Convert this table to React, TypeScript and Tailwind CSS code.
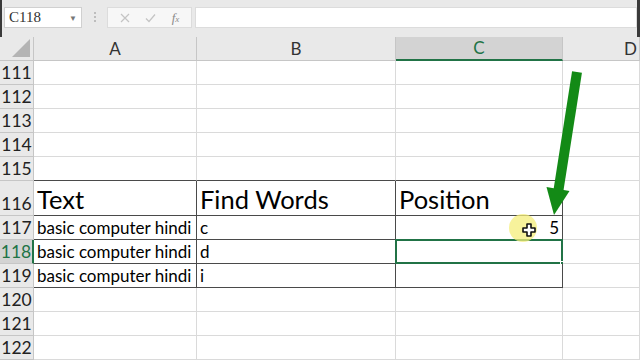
import React from "react";

const FONT = { fontFamily: "Lato, 'Open Sans', sans-serif" };

const rows = [
  { n: 111, h: "small" },
  { n: 112, h: "small" },
  { n: 113, h: "small" },
  { n: 114, h: "small" },
  { n: 115, h: "small" },
  { n: 116, h: "big" },
  { n: 117, h: "small" },
  { n: 118, h: "small" },
  { n: 119, h: "small" },
  { n: 120, h: "small" },
  { n: 121, h: "small" },
  { n: 122, h: "small" },
];

const tableData: Record<number, [string, string, string]> = {
  116: ["Text", "Find Words", "Position"],
  117: ["basic computer hindi", "c", "5"],
  118: ["basic computer hindi", "d", ""],
  119: ["basic computer hindi", "i", ""],
};

function inTable(row: number) {
  return row >= 116 && row <= 119;
}

function Cell({ row, col }: { row: number; col: number }) {
  const table = inTable(row) && col < 3;
  const topEdge = row === 115 && col < 3;
  const rightDark = table;
  const bottomDark = table || topEdge;
  const text = tableData[row]?.[col] ?? "";
  const header = row === 116;
  const numeric = col === 2 && row === 117;
  const selected = row === 118 && col === 2;

  return (
    <div
      className={`relative flex items-end overflow-visible whitespace-nowrap border-b border-r bg-white ${
        rightDark ? "border-r-[#4a4a4a]" : "border-r-[#dadada]"
      } ${bottomDark ? "border-b-[#4a4a4a]" : "border-b-[#dadada]"} ${
        numeric ? "justify-end pr-[3px]" : "pl-[3px]"
      } ${header ? "pb-[1px] text-[25.5px] leading-[30px]" : "pb-[1px] text-[17px] leading-[21px]"} text-black`}
    >
      {text}
      {selected ? (
        <>
          <div className="absolute -left-px -top-px bottom-[-1px] right-[-1px] border-2 border-[#217346]" />
          <div className="absolute bottom-[-3px] right-[-3px] h-[5px] w-[5px] border border-white bg-[#217346]" />
        </>
      ) : null}
    </div>
  );
}

function Toolbar() {
  return (
    <div className="flex h-[37px] items-start border-l-2 border-r-[3px] border-[#3a3a3a] bg-[#e9e9e9] pt-[7px]">
      <div className="ml-[2px] flex h-[21px] w-[78px] items-center justify-between border border-[#d0d0d0] bg-white pl-[4px] pr-[4px]">
        <span className="text-[15px] text-[#333]" style={{ fontFamily: "'Liberation Serif', serif" }}>
          C118
        </span>
        <span className="text-[8px] text-[#777]">▼</span>
      </div>
      <div className="flex w-[25px] flex-col items-center gap-[2px] pt-[5px]">
        <span className="h-[2px] w-[2px] bg-[#bdbdbd]" />
        <span className="h-[2px] w-[2px] bg-[#bdbdbd]" />
        <span className="h-[2px] w-[2px] bg-[#bdbdbd]" />
      </div>
      <div className="flex h-[21px] w-[85px] items-center justify-around border border-[#dcdcdc] bg-[#f7f7f7] px-[4px]">
        <svg width="10" height="10" viewBox="0 0 10 10">
          <path d="M1 1L9 9M9 1L1 9" stroke="#c4c4c4" strokeWidth="1.2" />
        </svg>
        <svg width="11" height="10" viewBox="0 0 11 10">
          <path d="M1 5.5L4 8.5L10 1.5" stroke="#c4c4c4" strokeWidth="1.2" fill="none" />
        </svg>
        <span className="text-[13px] italic text-[#8a8a8a]" style={{ fontFamily: "'Liberation Serif', serif" }}>
          f<span className="text-[9px]">x</span>
        </span>
      </div>
      <div className="ml-[3px] h-[21px] flex-1 border border-[#dcdcdc] bg-white" />
    </div>
  );
}

export default function App() {
  const cols = ["A", "B", "C", "D"];
  return (
    <div className="relative h-[360px] w-[640px] overflow-hidden bg-white" style={FONT}>
      <Toolbar />
      <div className="grid grid-cols-[34px_163px_199px_167px_1fr] grid-rows-[24px_repeat(5,24px)_35px_repeat(6,24px)]">
        <div className="relative border-b border-r border-[#c6c6c6] bg-[#e9e9e9]">
          <svg className="absolute bottom-[3px] right-[3px]" width="18" height="18" viewBox="0 0 18 18">
            <path d="M18 0L18 18L0 18Z" fill="#b4b4b4" />
          </svg>
        </div>
        {cols.map((c) => (
          <div
            key={c}
            className={`flex items-center justify-center border-r text-[17px] ${
              c === "C"
                ? "border-b-2 border-b-[#217346] border-r-[#c6c6c6] bg-[#d3d3d3] text-[#217346]"
                : "border-b border-[#c6c6c6] bg-[#e9e9e9] text-[#333]"
            } ${c === "D" ? "justify-end pr-[2px]" : ""}`}
          >
            {c}
          </div>
        ))}
        {rows.map((r) => (
          <React.Fragment key={r.n}>
            <div
              className={`flex items-end justify-center pb-[1px] text-[17.5px] leading-[21px] ${
                r.n === 118
                  ? "border-b border-r-2 border-b-[#c6c6c6] border-r-[#217346] bg-[#d3d3d3] text-[#217346]"
                  : "border-b border-r border-[#c6c6c6] bg-[#e9e9e9] text-[#222]"
              }`}
            >
              {r.n}
            </div>
            {[0, 1, 2, 3].map((ci) => (
              <Cell key={ci} row={r.n} col={ci} />
            ))}
          </React.Fragment>
        ))}
      </div>

      <svg className="pointer-events-none absolute left-0 top-0" width="640" height="360" viewBox="0 0 640 360">
        <circle cx="523" cy="228" r="14" fill="#f4ee7a" opacity="0.75" />
        <path
          d="M527 224h4v4h4v4h-4v4h-4v-4h-4v-4h4z"
          fill="#fff"
          stroke="#111"
          strokeWidth="1.6"
          strokeLinejoin="round"
        />
        <line x1="577" y1="72" x2="558.5" y2="190" stroke="#138a16" strokeWidth="10" />
        <polygon points="546.5,187 569.5,191 554,215" fill="#138a16" />
      </svg>
    </div>
  );
}
